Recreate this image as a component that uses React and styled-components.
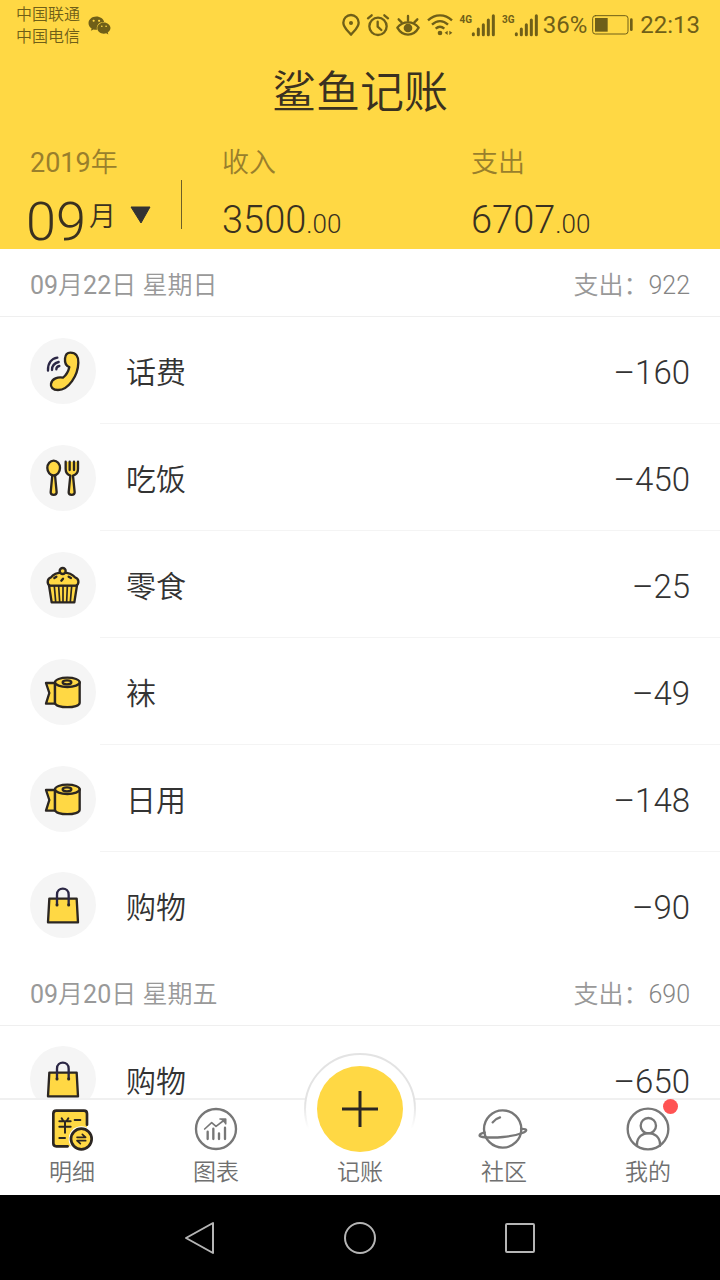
import React from "react";
import styled, { createGlobalStyle } from "styled-components";
import { FaWeixin } from "react-icons/fa";

const INK = "#2b2622";
const YELLOW = "#ffd844";
const STATUS = "#6f5f18";
const GREY = "#777";

const GlobalStyle = createGlobalStyle`
  * { box-sizing: border-box; }
  html, body, #root { height: 100%; }
  body {
    margin: 0;
    background: #fff;
    color: #333;
    font-family: Roboto, "Noto Sans CJK SC DemiLight", "Noto Sans CJK SC", sans-serif;
    font-weight: 400;
  }
  button { font: inherit; color: inherit; background: none; border: 0; padding: 0; cursor: pointer; }
  h1, h2, p, ul { margin: 0; padding: 0; font-size: inherit; font-weight: inherit; }
  ul { list-style: none; }
  svg { display: block; overflow: visible; }
`;

const Screen = styled.div`
  display: flex;
  flex-direction: column;
  height: 100vh;
`;

/* ---------- header ---------- */

const Header = styled.header`
  flex: none;
  background: ${YELLOW};
`;

const StatusBar = styled.div`
  display: flex;
  align-items: center;
  justify-content: space-between;
  height: 50px;
  padding: 0 20px 0 16px;
  color: ${STATUS};
`;

const StatusGroup = styled.div`
  display: flex;
  align-items: center;
  gap: ${(p) => p.$gap || 7}px;
`;

const Carriers = styled.p`
  padding-top: 2px;
  font-size: 16px;
  line-height: 22px;
`;

const StatusText = styled.span`
  font-size: 24px;
  line-height: 28px;
`;

const Signal = styled.span`
  display: flex;
  align-items: flex-start;
`;

const Network = styled.span`
  font-size: 10px;
  font-weight: 700;
  line-height: 11px;
`;

const BrandTitle = styled.h1`
  padding: 11px 0 22px;
  text-align: center;
  font-size: 44px;
  line-height: 64px;
  color: #3a3120;
`;

const Summary = styled.div`
  display: flex;
  padding: 0 0 7px 26px;
`;

const MonthButton = styled.button`
  display: flex;
  flex-direction: column;
  width: 155px;
  text-align: left;
`;

const Caption = styled.span`
  display: block;
  margin-bottom: 19px;
  padding-left: ${(p) => p.$inset || 0}px;
  font-size: 27px;
  line-height: 32px;
  color: #997f2c;
`;

const MonthLine = styled.span`
  display: flex;
  align-items: flex-start;
  height: 43px;
  overflow: hidden;
  color: #3a3120;
`;

const MonthNumber = styled.span`
  font-size: 54px;
  line-height: 48px;
  font-weight: 300;
`;

const MonthUnit = styled.span`
  padding-left: 3px;
  font-size: 27px;
  line-height: 38px;
`;

const Caret = styled.svg`
  margin: 8px 0 0 14px;
`;

const Divider = styled.span`
  width: 1px;
  height: 49px;
  margin-top: 33px;
  background: #6e5f28;
`;

const Totals = styled.div`
  flex: 1;
  display: grid;
  grid-template-columns: 1fr 1fr;
  margin-left: 40px;
`;

const Total = styled.p`
  height: 44px;
  font-size: 38px;
  line-height: 44px;
  font-weight: 300;
  color: #3a3120;
  small { font-size: 26px; line-height: 26px; }
`;

/* ---------- list ---------- */

const Feed = styled.main`
  flex: 1;
  min-height: 0;
  overflow: hidden;
`;

const DayHeader = styled.div`
  display: flex;
  align-items: center;
  justify-content: space-between;
  height: 68px;
  padding: 6px 30px 0;
  border-bottom: 1px solid #efefef;
  font-size: 25px;
  line-height: 32px;
  color: #999;
`;

const DayTotal = styled.p`
  span { font-weight: 300; color: #858585; }
`;

const Entry = styled.li`
  display: flex;
  align-items: center;
  padding-left: 30px;
`;

const IconDisc = styled.span`
  flex: none;
  width: 66px;
  height: 66px;
  margin-right: 4px;
  border-radius: 50%;
  background: #f5f5f5;
`;

const EntryBody = styled.div`
  flex: 1;
  display: flex;
  align-items: center;
  justify-content: space-between;
  height: 107px;
  padding: 6px 30px 0 26px;
  border-bottom: 1px solid #f4f4f4;
  ${Entry}:last-child & {
    height: 106px;
    border-bottom: 0;
  }
`;

const EntryName = styled.span`
  font-size: 30px;
  line-height: 40px;
`;

const Amount = styled.span`
  font-size: 33px;
  line-height: 40px;
  font-weight: 300;
`;

/* ---------- bottom bars ---------- */

const TabBar = styled.nav`
  position: relative;
  flex: none;
  display: grid;
  grid-template-columns: repeat(5, 1fr);
  border-top: 2px solid #f0f0f0;
  background: #fff;
`;

const Tab = styled.button`
  position: relative;
  display: flex;
  flex-direction: column;
  align-items: center;
  gap: 7px;
  padding: 7px 0;
  font-size: 23px;
  line-height: 30px;
  color: #707070;
`;

const TabIcon = styled.span`
  position: relative;
  width: 44px;
  height: 44px;
`;

const Badge = styled.span`
  position: absolute;
  top: -8px;
  right: -8px;
  width: 15px;
  height: 15px;
  border-radius: 50%;
  background: #ff5353;
`;

const AddDisc = styled.svg`
  position: absolute;
  left: 50%;
  top: -58px;
  width: 114px;
  height: 114px;
  margin-left: -57px;
`;

const TabLabel = styled.span`
  position: relative;
`;

const SystemBar = styled.nav`
  flex: none;
  display: flex;
  align-items: center;
  justify-content: center;
  gap: 124px;
  height: 85px;
  background: #000;
`;

const SystemButton = styled.button`
  width: 36px;
  height: 36px;
`;

/* ---------- drawings ---------- */

function StatusIcon({ w, h = 22, children }) {
  return (
    <svg width={w} height={h} viewBox={`0 0 ${w * 3} ${h * 3}`} fill="none" stroke={STATUS} strokeWidth="7" strokeLinecap="round" strokeLinejoin="round" aria-hidden="true">
      {children}
    </svg>
  );
}

const PinIcon = () => (
  <StatusIcon w={18}>
    <path d="M27 62C17 50 4 40 4 26a23 23 0 0 1 46 0C50 40 37 50 27 62Z" />
    <circle cx="27" cy="27" r="6" fill={STATUS} stroke="none" />
  </StatusIcon>
);

const AlarmIcon = () => (
  <StatusIcon w={22}>
    <circle cx="33" cy="37" r="26" />
    <path d="M32 23V38L43 48M3 13L14 4M63 13L52 4" />
  </StatusIcon>
);

const EyeIcon = () => (
  <StatusIcon w={24}>
    <path d="M4 41C20 20 52 20 68 41C52 69 20 69 4 41Z" />
    <circle cx="36" cy="42" r="13" fill={STATUS} stroke="none" />
    <path d="M36 20V6M17 25L8 16M55 25L64 16" />
  </StatusIcon>
);

const WifiIcon = () => (
  <StatusIcon w={26}>
    <path d="M3 19C24 -1 54 -1 75 19M15 32C30 18 48 18 63 32M26 44C35 36 43 36 52 44" strokeLinecap="butt" />
    <circle cx="39" cy="57" r="7" fill={STATUS} stroke="none" />
    <path d="M53 56L62 50V63ZM76 56L67 50V63Z" fill={STATUS} stroke="none" />
  </StatusIcon>
);

const SignalBars = () => (
  <StatusIcon w={23}>
    <path d="M4 59V62M19 45V62M34 32V62M49 18V62M64 5V62" strokeWidth="9" />
  </StatusIcon>
);

const BatteryIcon = () => (
  <StatusIcon w={41} h={20}>
    <rect x="2" y="2" width="106" height="55" rx="8" strokeWidth="3" />
    <rect x="9" y="9" width="38" height="41" fill={STATUS} stroke="none" />
    <path d="M118 14V44" strokeWidth="8" />
  </StatusIcon>
);

function CategoryIcon({ children }) {
  return (
    <svg width="66" height="66" viewBox="0 0 198 198" fill={YELLOW} stroke={INK} strokeWidth="7" strokeLinecap="round" strokeLinejoin="round" aria-hidden="true">
      {children}
    </svg>
  );
}

const PhoneIcon = () => (
  <CategoryIcon>
    <path d="M121 44C138 44 146 56 145 74C144 112 116 156 84 156C68 156 61 147 63 137C66 122 84 116 99 119C108 112 115 101 118 87C108 84 104 74 105 62C106 50 112 44 121 44Z" />
    <path d="M54 98C53 76 64 62 82 59M66 96C66 83 73 75 86 72M79 94C79 88 82 85 88 84" fill="none" stroke="#2b2745" />
  </CategoryIcon>
);

const DiningIcon = () => (
  <CategoryIcon>
    <path d="M67 90L62 142C62 152 80 152 80 142L75 90Z" />
    <ellipse cx="71" cy="69" rx="19" ry="22" />
    <path d="M107 50V72C107 83 113 89 121 92L116 142C116 152 134 152 134 142L129 92C138 89 144 83 144 72V50" />
    <path d="M119 50V75M132 50V75" fill="none" />
  </CategoryIcon>
);

const CupcakeIcon = () => (
  <CategoryIcon>
    <path d="M57 100L65 151H133L141 100Z" />
    <path d="M73 103L77 149M86 103L89 149M99 103V149M112 103L110 149M125 103L121 149" strokeWidth="5" />
    <path d="M60 101C49 96 52 79 63 76C76 57 120 57 135 76C147 79 149 96 138 101Z" />
    <circle cx="98" cy="57" r="9" />
    <path d="M73 78L79 74M94 86L99 80M116 74L123 78" />
  </CategoryIcon>
);

const PaperRollIcon = () => (
  <CategoryIcon>
    <path d="M75 72H48L58 102L48 134H75Z" />
    <path d="M75 70V131C75 149 149 149 149 131V70Z" />
    <ellipse cx="112" cy="70" rx="37" ry="14" />
    <ellipse cx="111" cy="70" rx="13" ry="6" />
  </CategoryIcon>
);

const BagIcon = () => (
  <CategoryIcon>
    <path d="M58 80H140L144 151H54Z" />
    <path d="M81 97V68C81 44 116 44 116 68V97" fill="none" stroke="#2b2745" />
    <path d="M81 98V99M116 98V99" strokeWidth="9" />
  </CategoryIcon>
);

function TabSvg({ children }) {
  return (
    <svg width="44" height="44" viewBox="0 0 132 132" fill="none" stroke={GREY} strokeWidth="7" strokeLinecap="round" strokeLinejoin="round" aria-hidden="true">
      {children}
    </svg>
  );
}

const DetailIcon = () => (
  <TabSvg>
    <rect x="10" y="11" width="101" height="107" rx="9" fill={YELLOW} stroke="none" />
    <path d="M111 53V20C111 14 108 11 102 11H19C13 11 10 14 10 20V109C10 115 13 118 19 118H53" stroke={INK} strokeWidth="8" />
    <path d="M35 34L40 42M55 34L50 42M28 43H62M28 59H62M45 43V77M74 39H91M28 93H45" stroke={INK} strokeWidth="6" />
    <circle cx="94" cy="96" r="38" fill="#fff" stroke="none" />
    <circle cx="94" cy="96" r="31" fill={YELLOW} stroke={INK} strokeWidth="8" />
    <path d="M81 91H107L97 82M107 101H81L91 110" stroke={INK} strokeWidth="5" />
  </TabSvg>
);

const ChartIcon = () => (
  <TabSvg>
    <circle cx="66" cy="66" r="60" />
    <path d="M32 66L53 47L66 58L91 39M78 36H95V50" strokeWidth="5" />
    <path d="M95 36V52L79 36Z" fill={GREY} stroke="none" />
    <path d="M41 74V96M58 65V96M75 79V96M93 62V96" />
  </TabSvg>
);

const PlanetIcon = () => (
  <TabSvg>
    <circle cx="62" cy="66" r="56" />
    <path d="M8 76C-10 80 -12 89 2 90C38 94 89 90 121 78C138 71 136 65 117 66" />
    <path d="M32 46C37 39 44 34 54 31" />
  </TabSvg>
);

const ProfileIcon = () => (
  <TabSvg>
    <circle cx="66" cy="66" r="61" />
    <circle cx="67" cy="56" r="23" />
    <path d="M33 116V112C33 67 102 67 102 112V116" />
  </TabSvg>
);

const AddIcon = () => (
  <AddDisc viewBox="0 0 114 114" aria-hidden="true">
    <defs>
      <linearGradient id="ringFade" x1="0" y1="0" x2="0" y2="1">
        <stop offset="0.45" stopColor="#e3e3e3" />
        <stop offset="0.68" stopColor="#fff" />
      </linearGradient>
    </defs>
    <circle cx="57" cy="67" r="55" fill="#fff" stroke="url(#ringFade)" strokeWidth="2" />
    <circle cx="57" cy="67" r="43" fill={YELLOW} />
    <path d="M39 67H75M57 49V85" stroke={INK} strokeWidth="3" />
  </AddDisc>
);

/* ---------- data ---------- */

const DAYS = [
  {
    date: "09月22日 星期日",
    total: "922",
    entries: [
      { name: "话费", amount: "–160", Icon: PhoneIcon },
      { name: "吃饭", amount: "–450", Icon: DiningIcon },
      { name: "零食", amount: "–25", Icon: CupcakeIcon },
      { name: "袜", amount: "–49", Icon: PaperRollIcon },
      { name: "日用", amount: "–148", Icon: PaperRollIcon },
      { name: "购物", amount: "–90", Icon: BagIcon },
    ],
  },
  {
    date: "09月20日 星期五",
    total: "690",
    entries: [{ name: "购物", amount: "–650", Icon: BagIcon }],
  },
];

const TABS = [
  { label: "明细", Icon: DetailIcon },
  { label: "图表", Icon: ChartIcon },
  { label: "记账", add: true },
  { label: "社区", Icon: PlanetIcon },
  { label: "我的", Icon: ProfileIcon, badge: true },
];

export default function App() {
  return (
    <Screen>
      <GlobalStyle />
      <Header>
        <StatusBar>
          <StatusGroup $gap={8}>
            <Carriers>
              中国联通
              <br />
              中国电信
            </Carriers>
            <FaWeixin size={23} aria-hidden="true" />
          </StatusGroup>
          <StatusGroup>
            <PinIcon />
            <AlarmIcon />
            <EyeIcon />
            <WifiIcon />
            <Signal>
              <Network>4G</Network>
              <SignalBars />
            </Signal>
            <StatusGroup $gap={5}>
              <Signal>
                <Network>3G</Network>
                <SignalBars />
              </Signal>
              <StatusText>36%</StatusText>
              <BatteryIcon />
            </StatusGroup>
            <StatusText>22:13</StatusText>
          </StatusGroup>
        </StatusBar>
        <BrandTitle>鲨鱼记账</BrandTitle>
        <Summary>
          <MonthButton type="button">
            <Caption $inset={4}>2019年</Caption>
            <MonthLine>
              <MonthNumber>09</MonthNumber>
              <MonthUnit>月</MonthUnit>
              <Caret width="21" height="18" viewBox="0 0 21 18" aria-hidden="true">
                <path d="M1 1H20L11 17Z" fill="#333" stroke="#333" strokeLinejoin="round" />
              </Caret>
            </MonthLine>
          </MonthButton>
          <Divider />
          <Totals>
            <div>
              <Caption>收入</Caption>
              <Total>3500<small>.00</small></Total>
            </div>
            <div>
              <Caption>支出</Caption>
              <Total>6707<small>.00</small></Total>
            </div>
          </Totals>
        </Summary>
      </Header>

      <Feed>
        {DAYS.map((day) => (
          <section key={day.date}>
            <DayHeader>
              <h2>{day.date}</h2>
              <DayTotal>支出：<span>{day.total}</span></DayTotal>
            </DayHeader>
            <ul>
              {day.entries.map(({ name, amount, Icon }) => (
                <Entry key={name}>
                  <IconDisc>
                    <Icon />
                  </IconDisc>
                  <EntryBody>
                    <EntryName>{name}</EntryName>
                    <Amount>{amount}</Amount>
                  </EntryBody>
                </Entry>
              ))}
            </ul>
          </section>
        ))}
      </Feed>

      <TabBar>
        {TABS.map(({ label, Icon, add, badge }) => (
          <Tab key={label} type="button">
            {add && <AddIcon />}
            <TabIcon>
              {Icon && <Icon />}
              {badge && <Badge />}
            </TabIcon>
            <TabLabel>{label}</TabLabel>
          </Tab>
        ))}
      </TabBar>

      <SystemBar>
        <SystemButton type="button" aria-label="返回">
          <svg width="36" height="36" viewBox="0 0 36 36" fill="none" stroke="#b5b5b5" strokeWidth="2" strokeLinejoin="round">
            <path d="M4 18L31 3V33Z" />
          </svg>
        </SystemButton>
        <SystemButton type="button" aria-label="主屏幕">
          <svg width="36" height="36" viewBox="0 0 36 36" fill="none" stroke="#b5b5b5" strokeWidth="2">
            <circle cx="18" cy="18" r="15" />
          </svg>
        </SystemButton>
        <SystemButton type="button" aria-label="最近任务">
          <svg width="36" height="36" viewBox="0 0 36 36" fill="none" stroke="#b5b5b5" strokeWidth="2" strokeLinejoin="round">
            <rect x="4" y="4" width="28" height="28" rx="1" />
          </svg>
        </SystemButton>
      </SystemBar>
    </Screen>
  );
}
